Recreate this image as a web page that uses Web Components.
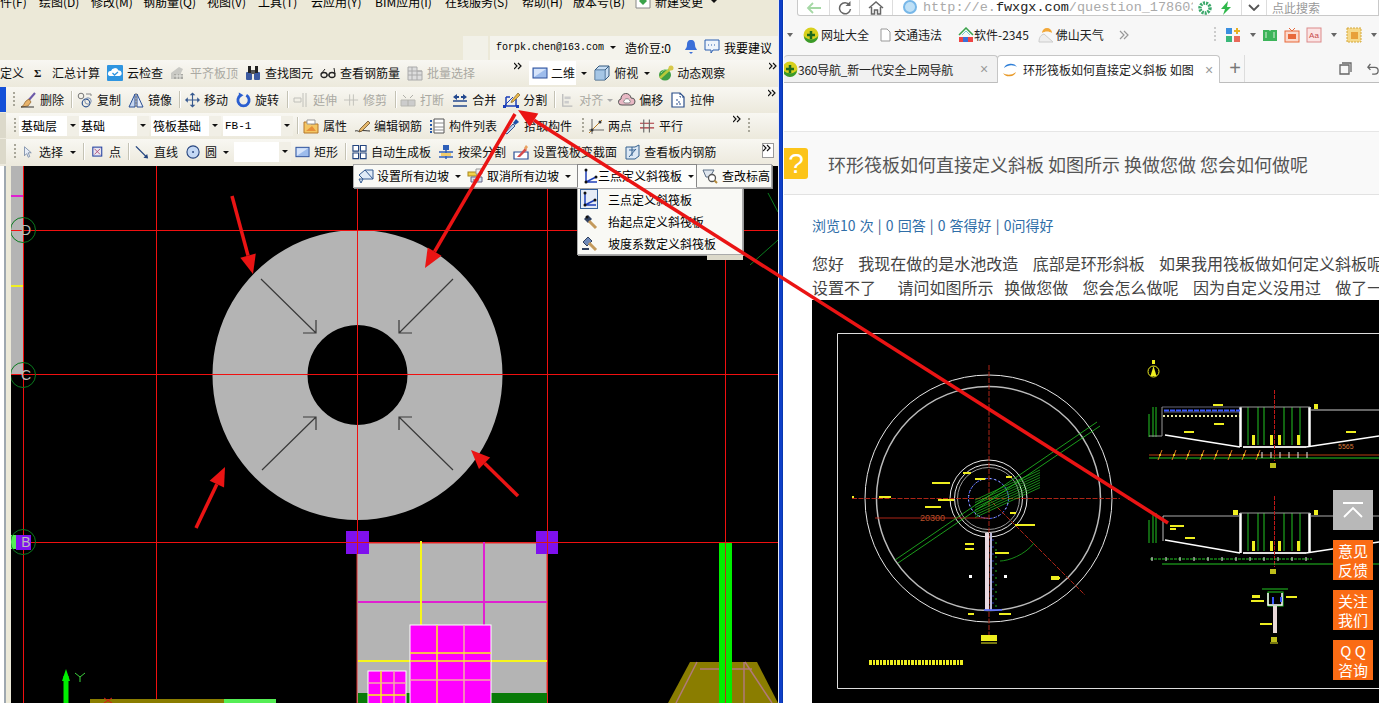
<!DOCTYPE html>
<html lang="zh">
<head>
<meta charset="utf-8">
<title>CAD</title>
<style>
  html, body { margin: 0; padding: 0; height: 703px; overflow: hidden; background: #fff; }
  body { font: 12px "Noto Sans CJK SC", "Liberation Sans", sans-serif; color: #000; }
</style>
</head>
<body>

<desk-top>
  <cad-app>
    <cad-menu></cad-menu>
    <user-bar></user-bar>

    <tool-row style="height:27px;padding-bottom:2px">
      <tool-item label="定义"></tool-item>
      <tool-item icon="sigma" iw="12" gap="6" label="汇总计算" style="margin-left:10px"></tool-item>
      <tool-item icon="cloud" label="云检查" style="margin-left:7px"></tool-item>
      <tool-item icon="level" label="平齐板顶" grey style="margin-left:7px"></tool-item>
      <tool-item icon="binoc" label="查找图元" style="margin-left:7px"></tool-item>
      <tool-item icon="glasses" label="查看钢筋量" style="margin-left:7px"></tool-item>
      <tool-item icon="batch" label="批量选择" grey style="margin-left:7px"></tool-item>
      <tool-more style="margin-left:39px"></tool-more>
      <tool-item icon="plane" gap="3" label="二维" boxed style="margin-left:7px"></tool-item>
      <tool-caret style="margin-left:5px"></tool-caret>
      <tool-item icon="cube" label="俯视" style="margin-left:7px"></tool-item>
      <tool-caret style="margin-left:6px"></tool-caret>
      <tool-item icon="orbit" gap="3" label="动态观察" style="margin-left:8px"></tool-item>
      <tool-more style="margin-left:44px"></tool-more>
    </tool-row>

    <tool-row>
      <tool-block color="#1450d8"></tool-block>
      <tool-grip style="margin-left:7px"></tool-grip>
      <tool-item icon="broom" label="删除" style="margin-left:5px"></tool-item>
      <tool-sep style="margin-left:7px"></tool-sep>
      <tool-item icon="copy" label="复制" style="margin-left:5px"></tool-item>
      <tool-item icon="mirror" label="镜像" style="margin-left:7px"></tool-item>
      <tool-sep style="margin-left:7px"></tool-sep>
      <tool-item icon="move" iw="15" label="移动" style="margin-left:5px"></tool-item>
      <tool-item icon="rotate" iw="15" label="旋转" style="margin-left:8px"></tool-item>
      <tool-sep style="margin-left:8px"></tool-sep>
      <tool-item icon="extend" label="延伸" grey style="margin-left:5px"></tool-item>
      <tool-item icon="trim" iw="15" label="修剪" grey style="margin-left:7px"></tool-item>
      <tool-sep style="margin-left:8px"></tool-sep>
      <tool-item icon="break" label="打断" grey style="margin-left:4px"></tool-item>
      <tool-item icon="merge" label="合并" style="margin-left:8px"></tool-item>
      <tool-item icon="split" label="分割" style="margin-left:7px"></tool-item>
      <tool-sep style="margin-left:7px"></tool-sep>
      <tool-item icon="align" iw="14" label="对齐" grey style="margin-left:6px"></tool-item>
      <tool-caret grey style="margin-left:4px"></tool-caret>
      <tool-item icon="offset" label="偏移" style="margin-left:6px"></tool-item>
      <tool-item icon="stretch" label="拉伸" style="margin-left:7px"></tool-item>
      <tool-more style="margin-left:54px"></tool-more>
    </tool-row>

    <tool-row>
      <tool-block color="#dcd9ca"></tool-block>
      <tool-grip style="margin-left:8px"></tool-grip>
      <tool-select label="基础层" w="60" style="margin-left:3px"></tool-select>
      <tool-select label="基础" w="70"></tool-select>
      <tool-select label="筏板基础" w="70" style="margin-left:2px"></tool-select>
      <tool-select label="FB-1" mono w="70" style="margin-left:2px"></tool-select>
      <tool-sep style="margin-left:4px"></tool-sep>
      <tool-item icon="folder" label="属性" style="margin-left:5px"></tool-item>
      <tool-item icon="pen" label="编辑钢筋" style="margin-left:7px"></tool-item>
      <tool-item icon="list" label="构件列表" style="margin-left:7px"></tool-item>
      <tool-item icon="dropper" label="拾取构件" style="margin-left:7px"></tool-item>
      <tool-grip style="margin-left:10px"></tool-grip>
      <tool-item icon="twopt" label="两点" style="margin-left:4px"></tool-item>
      <tool-item icon="hash" iw="15" label="平行" style="margin-left:8px"></tool-item>
      <tool-more style="margin-left:50px"></tool-more>
      <tool-grip style="margin-left:7px"></tool-grip>
    </tool-row>

    <tool-row style="height:27px;padding-bottom:2px">
      <tool-block color="#dcd9ca"></tool-block>
      <tool-grip style="margin-left:8px"></tool-grip>
      <tool-item icon="cursor" iw="12" label="选择" style="margin-left:7px"></tool-item>
      <tool-caret style="margin-left:7px"></tool-caret>
      <tool-sep style="margin-left:7px"></tool-sep>
      <tool-item icon="point" iw="13" label="点" style="margin-left:8px"></tool-item>
      <tool-sep style="margin-left:7px"></tool-sep>
      <tool-item icon="line" iw="15" label="直线" style="margin-left:6px"></tool-item>
      <tool-item icon="circle" iw="15" label="圆" style="margin-left:8px"></tool-item>
      <tool-caret style="margin-left:6px"></tool-caret>
      <tool-select label="" w="57" style="margin-left:5px"></tool-select>
      <tool-item icon="plane" iw="15" label="矩形" style="margin-left:4px"></tool-item>
      <tool-sep style="margin-left:7px"></tool-sep>
      <tool-item icon="auto" iw="15" label="自动生成板" style="margin-left:6px"></tool-item>
      <tool-item icon="beam" label="按梁分割" style="margin-left:7px"></tool-item>
      <tool-item icon="varsec" label="设置筏板变截面" style="margin-left:7px"></tool-item>
      <tool-item icon="rebar" label="查看板内钢筋" style="margin-left:7px"></tool-item>
      <tool-more boxed style="margin-left:47px"></tool-more>
    </tool-row>

    <cad-work></cad-work>
  </cad-app>

  <pane-divider></pane-divider>

  <browser-pane>
    <browser-nav></browser-nav>
    <browser-marks></browser-marks>
    <browser-tabs></browser-tabs>
    <qa-page></qa-page>
    <side-float></side-float>
  </browser-pane>

  <slope-popup></slope-popup>
  <red-arrows></red-arrows>
</desk-top>

<script>
const ICONS = {
  sigma: '<text x="0" y="13" font-family="Liberation Serif" font-weight="bold" font-size="15" fill="#111">Σ</text>',
  cloud: '<rect width="16" height="16" rx="1" fill="#2f95e0"/><path d="M3 11a2.5 2.5 0 0 1 1-5 4 4 0 0 1 7.500-.5 2.800 2.800 0 0 1 1 5.500z" fill="#fff"/><path d="M5.500 8l2 2 3.500-3" fill="none" stroke="#2f95e0" stroke-width="1.300"/>',
  level: '<path d="M1 8l8-6 4 2-2 4v6H1z" fill="#c9c9c4"/><path d="M4 9h9v5H4z" fill="#a9a9a4"/><path d="M4 11h9M7 9v5M10 9v5" stroke="#e8e8e2"/>',
  binoc: '<rect x="1" y="7" width="6" height="8" rx="1" fill="#3c5aa0"/><rect x="9" y="7" width="6" height="8" rx="1" fill="#3c5aa0"/><rect x="3" y="1" width="3" height="7" fill="#222"/><rect x="10" y="1" width="3" height="7" fill="#222"/><rect x="6" y="5" width="4" height="4" fill="#555"/>',
  glasses: '<ellipse cx="4" cy="10" rx="3" ry="2.500" fill="none" stroke="#222" stroke-width="1.300"/><ellipse cx="12" cy="10" rx="3" ry="2.500" fill="none" stroke="#222" stroke-width="1.300"/><path d="M7 10h2M1 9l4-5M15 9l-1-6" stroke="#222" fill="none"/>',
  batch: '<path d="M1 2h9v4h5v9H1z" fill="#ddd" stroke="#aaa"/><path d="M1 6h14M1 10h14M5 2v13M10 6v9" stroke="#aaa"/>',
  plane: '<rect x="1" y="3" width="14" height="10" fill="#9dbcec" stroke="#2b4f9a"/><path d="M2 4h12L2 12z" fill="#d6e4fa"/>',
  cube: '<path d="M1 5l4-4h10v10l-4 4H1z" fill="#c6dcf2" stroke="#33597f"/><path d="M1 5h10v10M11 5l4-4" fill="none" stroke="#33597f"/><rect x="1" y="5" width="10" height="10" fill="#8fb8dc" opacity=".6"/>',
  orbit: '<ellipse cx="7" cy="10" rx="6" ry="5.500" fill="#3f9f43"/><path d="M2 13L14 2" stroke="#b8c93a" stroke-width="2.500"/><circle cx="13" cy="3" r="2.500" fill="#d8c84a"/><path d="M3 8c2-3 5-4 7-3" stroke="#a6dd9a" fill="none"/>',
  broom: '<path d="M15 1L8 9" stroke="#6c5aa8" stroke-width="2"/><path d="M9 7l2 3-3 4-7 1c3-1 3-4 5-6z" fill="#e8b36a" stroke="#8a5b22" stroke-width=".7"/><path d="M1 15h13" stroke="#333"/>',
  copy: '<circle cx="4" cy="4" r="2.800" fill="none" stroke="#777"/><circle cx="9" cy="11" r="3.800" fill="none" stroke="#31558f" stroke-width="1.200"/><circle cx="11" cy="9" r="3.200" fill="none" stroke="#7a8fb0"/><path d="M9 2h5v2" stroke="#888" fill="none"/>',
  mirror: '<path d="M7 2v13H1z" fill="#c7d7f0" stroke="#2a4f95"/><path d="M9 2v13h6z" fill="#e8eef8" stroke="#2a4f95"/><path d="M8 1v14" stroke="#777" stroke-dasharray="2 1"/>',
  move: '<path d="M8 1v14M1 8h14" stroke="#36598f" stroke-width="1.200"/><path d="M8 0l3 3H5zM8 16l3-3H5zM0 8l3-3v6zM16 8l-3-3v6z" fill="#36598f"/>',
  rotate: '<path d="M5 3a6 6 0 1 0 6 0" fill="none" stroke="#2a5ed0" stroke-width="3"/><path d="M3 0l5 3-5 3z" fill="#2a5ed0"/>',
  extend: '<path d="M1 6h7M1 10h7M10 1v14M13 1v14" stroke="#c0c0ba" fill="none"/><path d="M1 6v4M8 6v4" stroke="#c0c0ba"/>',
  trim: '<path d="M0 8h15M6 2v12M10 2v12" stroke="#c0c0ba" fill="none"/>',
  break: '<path d="M1 8h14v6H1z" fill="#ccc" stroke="#b8b8b2"/><path d="M3 3l3 3M13 3l-3 3M8 8v6" stroke="#b0b0aa"/>',
  merge: '<path d="M1 9h14M1 14h14" stroke="#24498f" stroke-width="1.500"/><path d="M1 5l4-3v2h2v2H5v2zM15 5l-4-3v2H9v2h2v2z" fill="#24498f"/>',
  split: '<path d="M1 14h14M3 5v9M13 7v7M3 5h4" stroke="#1c3fb8" stroke-width="1.500" fill="none"/><path d="M1 14l9-9" stroke="#1c3fb8"/><path d="M9 8l6-7 2 2-7 7-2 .5z" fill="#e8b84a" stroke="#6a4d18" stroke-width=".6"/><rect x="0" y="13" width="3" height="3" fill="#1c3fb8"/><rect x="13" y="13" width="3" height="3" fill="#1c3fb8"/>',
  align: '<path d="M2 1v14h11" stroke="#bbb" fill="none" stroke-width="1.500"/><rect x="4" y="4" width="7" height="3" fill="#ccc"/><rect x="4" y="9" width="5" height="3" fill="#ccc"/>',
  offset: '<path d="M3 13a3 3 0 0 1-1-6 5 5 0 0 1 10-1 3.500 3.500 0 0 1 1 7z" fill="#e8b8c4" stroke="#555"/><path d="M5.500 11a2 2 0 0 1 0-3 3 3 0 0 1 5 0 2 2 0 0 1 0 3z" fill="#fff" stroke="#888"/>',
  stretch: '<path d="M2 1h8l4 4v10H2z" fill="#fff" stroke="#2b4f8a" stroke-width="1.200"/><path d="M10 1v4h4M6 8h3M8 10h3M6 12h5" stroke="#2b4f8a" fill="none" stroke-dasharray="2 1"/>',
  folder: '<path d="M1 4h6l1 2h7v9H1z" fill="#f4c663" stroke="#b5772a"/><path d="M4 2h8v4H4z" fill="#fff" stroke="#999"/><path d="M3 13l6-5 4 5z" fill="#e78f3a"/>',
  pen: '<path d="M1 13c3-1 3 1 5 0s8 0 10 0" stroke="#333" fill="none"/><path d="M6 11l8-8 2 2-8 8-3 1z" fill="#e4b76a" stroke="#5b3d18" stroke-width=".7"/>',
  list: '<path d="M5 1h10v14H5z" fill="#fff" stroke="#555"/><path d="M5 5h10M5 9h10M5 12h10" stroke="#888"/><path d="M1 3h2M1 7h2M1 11h2M1 14h2" stroke="#2456a8" stroke-width="2"/>',
  dropper: '<path d="M1 15l8-9 2 2-8 8z" fill="#bcd6f2" stroke="#36558f"/><path d="M9 5l3-4 3 3-4 3z" fill="#1c4fa8"/>',
  twopt: '<path d="M1 12h15M4 1v15" stroke="#666" fill="none"/><path d="M1 15L14 2" stroke="#b77a22"/><circle cx="4" cy="12" r="1.500" fill="#333"/><circle cx="12" cy="4" r="1.500" fill="#333"/>',
  hash: '<path d="M0 5h15M0 10h15" stroke="#a8333a" stroke-width="1.200"/><path d="M4 1v14M10 1v14" stroke="#666" stroke-width="1.200"/>',
  cursor: '<path d="M2 1v12l3-3 2 5 2-1-2-5h4z" fill="#e8eef8" stroke="#6b7f9e"/>',
  point: '<rect x="1" y="2" width="11" height="11" fill="#e8e6f0" stroke="#2340a0" stroke-width="1.300"/><path d="M3 4l7 7M10 4l-7 7" stroke="#a83a6a"/>',
  line: '<path d="M1 2l12 12" stroke="#24457f" stroke-width="1.500"/><path d="M14 15l-5-1 4-4z" fill="#24457f"/>',
  circle: '<circle cx="7.500" cy="8" r="6.500" fill="#c4d8f4" stroke="#27457f" stroke-width="1.200"/><circle cx="7.500" cy="8" r="1" fill="#27457f"/>',
  auto: '<path d="M1 1h6v6H1zM9 1h6v6H9zM1 9h6v6H1zM9 9h6v6H9z" fill="#fff" stroke="#24457f" stroke-width="1.200"/>',
  beam: '<rect x="5" y="1" width="6" height="5" fill="#2f5fb8"/><path d="M1 8h14M8 6v9M1 13h14" stroke="#2f5fb8" stroke-width="1.500"/><rect x="3" y="9" width="10" height="3" fill="#f1cc6a"/>',
  varsec: '<path d="M1 8h14v7H1z" fill="#fff" stroke="#2a4f95" stroke-width="1.200"/><path d="M4 13L12 4l2 2-7 7z" fill="#d64a4a"/><path d="M11 4l2-3 2 2-2 3z" fill="#e8a060"/>',
  rebar: '<path d="M2 3h9l4-2v11l-4 3H2z" fill="#dce8f4" stroke="#34608f"/><path d="M5 6h6M8 3v9M5 13l7-8" stroke="#34608f" fill="none"/>',
  slope: '<path d="M1 7l6-5h8v9H5l-2 4-2-4h4z" fill="#dfeaf6" stroke="#33598f"/><path d="M7 2l8 9" stroke="#33598f"/>',
  slopeoff: '<rect x="1" y="4" width="9" height="4" fill="#f1d24a" stroke="#a8871f"/><path d="M4 9h11v5H4z" fill="#cfe0ef" stroke="#668"/><path d="M9 1h6v5H9z" fill="#eee" stroke="#999"/><path d="M6 12h6" stroke="#c33"/>',
  three: '<path d="M4 1v13h11M4 14L14 9" stroke="#1f3fb8" stroke-width="1.500" fill="none"/><circle cx="4" cy="2" r="1.500" fill="#111"/><circle cx="4" cy="14" r="1.500" fill="#111"/><circle cx="14" cy="9" r="1.500" fill="#111"/>',
  magnify: '<path d="M1 2h11l-4 7H4z" fill="#dfe6ee" stroke="#5b6e85"/><circle cx="10" cy="10" r="3.500" fill="#fff" stroke="#555" stroke-width="1.300"/><path d="M12.500 12.500L15 15" stroke="#b58a3a" stroke-width="2"/>',
  hammer: '<path d="M3 6l4-4 4 4-4 4z" fill="#31415f"/><path d="M8 8l7 7" stroke="#c49a5c" stroke-width="3"/><circle cx="6" cy="4" r="1.500" fill="#111"/>',
  hammer2: '<path d="M2 7l5-5 4 4-5 5z" fill="#6f89b8" stroke="#31415f"/><path d="M8 8l7 7" stroke="#c49a5c" stroke-width="3"/><path d="M1 14h7" stroke="#31415f" stroke-width="2"/>',
  ring: '<circle cx="8" cy="8" r="7.500" fill="#d8d01c"/><path d="M1 9a7 7 0 0 0 14 0 9 9 0 0 1-14 0z" fill="#3a9a2a"/><path d="M8 4v8M4 8h8" stroke="#1c6a1c" stroke-width="2.500"/>'
};

function svgIcon(name, w) {
  return `<svg width="${w}" height="16" viewBox="0 0 16 16" style="display:block;overflow:visible">${ICONS[name] || ''}</svg>`;
}

class ToolRow extends HTMLElement {
  connectedCallback() {
    this.attachShadow({ mode: 'open' });
    this.shadowRoot.innerHTML = `
      <style>
        :host { display: flex; align-items: center; height: 26px; padding-bottom: 1px; box-sizing: border-box;
          background: linear-gradient(#f8f7f2, #ece9dc); white-space: nowrap; flex: none; }
      </style><slot></slot>`;
  }
}
class ToolItem extends HTMLElement {
  connectedCallback() {
    const root = this.attachShadow({ mode: 'open' });
    const icon = this.getAttribute('icon');
    const iw = +(this.getAttribute('iw') || 16);
    const gap = this.getAttribute('gap') || 4;
    root.innerHTML = `
      <style>
        :host { display: flex; align-items: center; gap: ${gap}px; flex: none; font-size: 12px; line-height: 16px; color: #111; }
        :host([grey]) { color: #aaa9a2; }
        :host([boxed]) { background: #fff; height: 24px; padding: 0 1px 0 3px; }
      </style>
      ${icon ? svgIcon(icon, iw) : ''}<span>${this.getAttribute('label')}</span>`;
  }
}
class ToolSep extends HTMLElement {
  connectedCallback() {
    this.attachShadow({ mode: 'open' }).innerHTML = `<style>:host { display:block; width:1px; height:17px; background:#c4c2b4; box-shadow:1px 0 #fff; flex:none; }</style>`;
  }
}
class ToolGrip extends HTMLElement {
  connectedCallback() {
    this.attachShadow({ mode: 'open' }).innerHTML = `<style>:host { display:block; width:2px; height:16px; flex:none;
      background: repeating-linear-gradient(#a9a79a 0 2px, transparent 2px 4px); }</style>`;
  }
}
class ToolCaret extends HTMLElement {
  connectedCallback() {
    this.attachShadow({ mode: 'open' }).innerHTML = `<style>:host { display:block; width:0; height:0; flex:none; margin-top:1px;
      border:3px solid transparent; border-top:3px solid #111; border-bottom:0; }
      :host([grey]) { border-top-color:#aaa; }</style>`;
  }
}
class ToolMore extends HTMLElement {
  connectedCallback() {
    this.attachShadow({ mode: 'open' }).innerHTML = `<style>:host { display:block; width:8px; height:14px; flex:none; margin-top:-8px; }
      :host([boxed]) { width:10px; height:13px; margin-top:-2px; background:#fff; outline:1px solid #999; }
      svg { display:block; }</style>
      <svg width="8" height="8" viewBox="0 0 8 8"><path d="M0 1l3 3-3 3M4 1l3 3-3 3" fill="none" stroke="#111" stroke-width="1.200"/></svg>`;
  }
}
class ToolSelect extends HTMLElement {
  connectedCallback() {
    const mono = this.hasAttribute('mono');
    this.attachShadow({ mode: 'open' }).innerHTML = `
      <style>
        :host { display:flex; align-items:center; width:${this.getAttribute('w')}px; height:20px; background:#fff; flex:none; box-sizing:border-box; padding-left:2px; }
        span { flex:1; ${mono ? 'font:11px "Liberation Mono", monospace;' : ''} }
        i { display:flex; align-items:center; justify-content:center; width:12px; height:20px; background:#f1efe6; }
        b { border:3px solid transparent; border-top:3px solid #111; border-bottom:0; }
      </style><span>${this.getAttribute('label')}</span><i><b></b></i>`;
  }
}
class ToolBlock extends HTMLElement {
  connectedCallback() {
    this.attachShadow({ mode: 'open' }).innerHTML = `<style>:host { display:block; width:6px; height:100%; flex:none; background:${this.getAttribute('color')}; }</style>`;
  }
}

class CadMenu extends HTMLElement {
  connectedCallback() {
    const items = ['件(F)','绘图(D)','修改(M)','钢筋量(Q)','视图(V)','工具(T)','云应用(Y)','BIM应用(I)','在线服务(S)','帮助(H)','版本号(B)'];
    const widths = [39, 52, 52, 64, 51, 53, 64, 70, 77, 51, 62];
    this.attachShadow({ mode: 'open' }).innerHTML = `
      <style>
        :host { display:block; height:10px; overflow:hidden; background:#ece9d8; flex:none; }
        div { display:flex; align-items:center; height:16px; margin-top:-7px; white-space:nowrap; }
        span { flex:none; }
        svg { margin-right:4px; }
        b { margin-left:8px; border:3px solid transparent; border-top:3px solid #111; border-bottom:0; }
      </style>
      <div>${items.map((t, i) => `<span style="width:${widths[i]}px">${t}</span>`).join('')}
        <svg width="16" height="16" viewBox="0 0 16 16"><path d="M1 1h14v14H1z" fill="#fff" stroke="#888"/><path d="M8 4l4 4-4 4-4-4z" fill="#3aa24a"/></svg>
        <span>新建变更</span><b></b></div>`;
  }
}

class UserBar extends HTMLElement {
  connectedCallback() {
    this.attachShadow({ mode: 'open' }).innerHTML = `
      <style>
        :host { display:flex; height:24px; margin-top:26px; background:#ece9d8; flex:none; padding-left:463px; gap:2px; box-sizing:border-box; }
        .tab { width:25px; background:#f2f1e8; }
        .main { flex:1; background:#f4f3ec; display:flex; align-items:center; padding:0 0 2px 6px; }
        .mail { font:10px "Liberation Mono", monospace; width:108px; }
        b { border:3px solid transparent; border-top:3px solid #111; border-bottom:0; margin:1px 9px 0 6px; }
        .bean { margin-right:11px; width:48px; }
        svg { display:block; flex:none; }
      </style>
      <div class="tab"></div>
      <div class="main">
        <span class="mail">forpk.chen@163.com</span><b></b>
        <span class="bean">造价豆:0</span>
        <svg width="14" height="16" viewBox="0 0 14 16"><path d="M7 1c3 0 4 2 4 5s2 4 2 5H1c0-1 2-2 2-5s1-5 4-5z" fill="#3b6fd8"/><path d="M5 13h4l-2 2z" fill="#3b6fd8"/></svg>
        <svg width="16" height="16" viewBox="0 0 16 16" style="margin:0 4px 0 6px"><path d="M1 1h14v10H9l-2 3v-3H1z" fill="#eef4fb" stroke="#2a5fb0"/><path d="M4 6h1M7 6h1M10 6h1" stroke="#2a5fb0"/></svg>
        <span>我要建议</span>
      </div>`;
  }
}

class CadWork extends HTMLElement {
  connectedCallback() {
    const grid = (x0, y0, x1, y1, xs, ys) => {
      let s = `<rect x="${x0}" y="${y0}" width="${x1 - x0}" height="${y1 - y0 + 20}" fill="#ff00ff" stroke="#fff"/>`;
      xs.forEach(([x, c]) => s += `<path d="M${x} ${y0}V${y1 + 20}" stroke="${c}" stroke-width="1.500"/>`);
      ys.forEach(([y, c]) => s += `<path d="M${x0} ${y}H${x1}" stroke="${c}" stroke-width="1.500"/>`);
      return s;
    };
    const cross = (x, y, l) => `<circle cx="${x}" cy="${y}" r="12.500" fill="none" stroke="#0a7a1e"/><text x="${x + 3}" y="${y + 5}" font-family="Liberation Sans" font-size="14" text-anchor="middle" fill="#b9bdb9">${l}</text>`;
    this.attachShadow({ mode: 'open' }).innerHTML = `
      <style>
        :host { display:flex; flex:1; min-height:0; background:#ece9d8; }
        .side { width:11px; flex:none; background:linear-gradient(90deg,#fff 0 4px,#9fa8b0 4px 6px,#ece9d8 6px); }
        svg { display:block; flex:1; height:100%; background:#000; }
      </style>
      <div class="side"></div>
      <svg viewBox="11 166 767 537" preserveAspectRatio="xMinYMin slice">
        <rect x="11" y="166" width="12" height="209" fill="#b4b4b4"/>
        <rect x="11" y="195" width="12" height="2" fill="#e020d0"/>
        <rect x="11" y="285" width="12" height="2" fill="#f0f020"/>
        <path d="M357.500 230a145 145 0 1 1-.01 0zM357.500 325a50 50 0 1 0 .01 0z" fill="#b4b4b4" fill-rule="evenodd"/>
        <g stroke="#f01010" stroke-width="1" fill="none">
          <path d="M23.500 166V703M156.500 166V703M357.500 166V703M547.500 166V703M725.500 166V703"/>
          <path d="M11 230.500H778M11 374.500H778M11 542.500H778"/>
        </g>
        <g stroke="#3a3a3a" stroke-width="1.200" fill="none">
          <path d="M261 279L316 333M316 320V333H303M453 279L399 333M399 320V333H412M262 470L316 417M303 417H316V430M453 470L399 417M412 417H399V430"/>
        </g>
        <path d="M750 265L778 240M768 193L778 212" stroke="#0a7a1e" fill="none"/>
        ${cross(23, 230, 'D')}${cross(23, 375, 'C')}
        <rect x="11" y="535" width="5" height="14" fill="#55ee55"/>
        <rect x="16" y="535" width="15" height="15" fill="#7f10ee"/>
        ${cross(23, 542, 'B')}
        <rect x="357" y="543" width="190" height="160" fill="#b4b4b4" stroke="#e03030"/>
        <rect x="358" y="693" width="189" height="10" fill="#087a08"/>
        <path d="M358 602H547" stroke="#e020d0" stroke-width="2"/>
        <path d="M484 542V625" stroke="#e020d0" stroke-width="2"/>
        <path d="M421 541V625" stroke="#f6f61c" stroke-width="2"/>
        <path d="M358 661H547" stroke="#f6f61c" stroke-width="2"/>
        ${grid(410, 625, 491, 703, [[437, '#f6f61c'], [464, '#f4a8a8']], [[653, '#f6f61c'], [661, '#f6f61c'], [680, '#f4a8a8']])}
        ${grid(368, 671, 406, 703, [[381, '#f6f61c'], [394, '#f4a8a8']], [[683, '#f4a8a8'], [695, '#f6f61c']])}
        <rect x="346" y="531" width="23" height="23" fill="#7f10ee"/>
        <rect x="536" y="531" width="22" height="23" fill="#7f10ee"/>
        <path d="M357.500 531V554M346 542.500H369M547.500 531V554M536 542.500H558" stroke="#d81818"/>
        <path d="M690 662H757L778 703H668z" fill="#8a7d00"/>
        <path d="M697 662L676 703M700 669H752M745 662L772 703M744 662V703" stroke="#b07a7a" stroke-width="1.500" fill="none"/>
        <rect x="719" y="543" width="13" height="160" fill="#00ee00"/>
        <path d="M725.500 543V703" stroke="#c03018"/>
        <rect x="90" y="699" width="134" height="4" fill="#8a7d00"/>
        <rect x="224" y="699" width="52" height="4" fill="#55ee55"/>
        <path d="M66 703V676" stroke="#00ee00" stroke-width="5"/><path d="M66 669l4 12h-8z" fill="#00ee00"/>
        <path d="M75 673l5 4 5-4M80 677v5" stroke="#3cd23c" fill="none"/>
        <path d="M104 698l8 5M112 698l-8 5" stroke="#d81818" fill="none"/>
      </svg>`;
  }
}

class PaneDivider extends HTMLElement {
  connectedCallback() {
    this.attachShadow({ mode: 'open' }).innerHTML = `<style>:host { display:block; width:6px; flex:none; background:linear-gradient(90deg,#e6e8f4 0 1px,#0f3fc8 1px 4px,#0838b0 4px 5px,#fff 5px); }</style>`;
  }
}

class BrowserNav extends HTMLElement {
  connectedCallback() {
    this.attachShadow({ mode: 'open' }).innerHTML = `
      <style>
        :host { display:block; height:18px; background:#f7f7f7; padding:0 0 0 13px; flex:none; overflow:hidden; }
        .box { display:flex; align-items:center; height:16px; background:#fff; border:1px solid #c9c9c9; border-top:0; border-radius:0 0 0 3px; box-sizing:border-box; }
        .b { display:flex; align-items:center; justify-content:center; height:100%; border-right:1px solid #ddd; flex:none; }
        svg { display:block; flex:none; }
        .url { flex:none; width:270px; overflow:hidden; white-space:nowrap; font:13.500px "Liberation Mono", monospace; color:#aaa; margin:0 5px 0 5px; line-height:16px; }
        .url b { color:#222; font-weight:normal; }
        .s { margin-left:5px; color:#999; font-size:12px; white-space:nowrap; }
      </style>
      <div class="box">
        <div class="b" style="width:31px"><svg width="16" height="12" viewBox="0 0 16 12"><path d="M7 1L2 6l5 5M2 6h13" stroke="#a5d8a5" stroke-width="1.800" fill="none"/></svg></div>
        <div class="b" style="width:29px"><svg width="14" height="14" viewBox="0 0 14 14"><path d="M11.500 4a5.500 5.500 0 1 0 1 4" stroke="#666" stroke-width="1.500" fill="none"/><path d="M12.500 0v5h-5z" fill="#666"/></svg></div>
        <div class="b" style="width:32px"><svg width="16" height="14" viewBox="0 0 16 14"><path d="M1 7l7-6 7 6M3.500 6v7h3V9h3v4h3V6" stroke="#666" stroke-width="1.500" fill="none"/></svg></div>
        <svg width="16" height="16" viewBox="0 0 16 16" style="margin-left:9px"><circle cx="8" cy="7" r="6" fill="#bfe0f6" stroke="#77b7e8" stroke-width="2"/></svg>
        <div class="url">http://e.<b>fwxgx.com</b>/question_178603</div>
        <svg width="14" height="14" viewBox="0 0 14 14"><circle cx="7" cy="7" r="5" fill="none" stroke="#3aa86a" stroke-width="3.500" stroke-dasharray="2 1"/></svg>
        <svg width="12" height="14" viewBox="0 0 12 14" style="margin-left:8px"><path d="M8 0L1 8h4l-2 6 8-8H7z" fill="#2fb84a"/></svg>
        <div class="b" style="width:9px;height:100%"></div>
        <div class="b" style="width:24px"><svg width="12" height="7" viewBox="0 0 12 7"><path d="M1 1l5 5 5-5" stroke="#555" stroke-width="1.800" fill="none"/></svg></div>
        <span class="s">点此搜索</span>
      </div>`;
  }
}

class BrowserMarks extends HTMLElement {
  connectedCallback() {
    const caret = m => `<b style="margin-left:${m}px"></b>`;
    this.attachShadow({ mode: 'open' }).innerHTML = `
      <style>
        :host { display:flex; align-items:center; height:37px; padding:0 0 4px 3px; background:#f7f7f7; flex:none; white-space:nowrap; box-sizing:border-box; color:#222; }
        svg { display:block; flex:none; }
        b { flex:none; border:3px solid transparent; border-top:4px solid #666; border-bottom:0; }
        span { flex:none; }
        i { flex:none; width:2px; height:16px; background:repeating-linear-gradient(#ccc 0 2px,transparent 2px 4px); }
      </style>
      <b></b>
      <svg width="16" height="16" viewBox="0 0 16 16" style="margin-left:10px">${ICONS.ring}</svg>
      <span style="margin-left:2px">网址大全</span>
      <svg width="11" height="14" viewBox="0 0 11 14" style="margin-left:11px"><path d="M1 1h6l3 3v9H1z" fill="#fff" stroke="#999"/></svg>
      <span style="margin-left:3px">交通违法</span>
      <svg width="16" height="16" viewBox="0 0 16 16" style="margin-left:16px"><path d="M1 8l7-7 7 7" fill="none" stroke="#3aa24a" stroke-width="1.500"/><path d="M4 8l4-4 4 4" fill="none" stroke="#7cc"/><rect x="1" y="10" width="14" height="5" fill="#e44"/><rect x="5" y="10" width="5" height="5" fill="#3a6fd8"/></svg>
      <span style="margin-left:0">软件-2345</span>
      <svg width="16" height="16" viewBox="0 0 16 16" style="margin-left:9px"><path d="M1 15c0-5 2-7 5-8l9 8z" fill="#eee" stroke="#ccc"/><path d="M4 6a5 5 0 0 1 10 0c-3-2-7-2-10 0z" fill="#f2a83a"/></svg>
      <span style="margin-left:2px">佛山天气</span>
      <svg width="10" height="10" viewBox="0 0 10 10" style="margin-left:15px"><path d="M1 1l4 4-4 4M5 1l4 4-4 4" stroke="#999" fill="none" stroke-width="1.200"/></svg>
      <i style="margin-left:85px"></i>
      <svg width="16" height="16" viewBox="0 0 16 16" style="margin-left:9px"><rect x="1" y="1" width="6" height="6" fill="#3a8fe0"/><path d="M12 1v6M9 4h6" stroke="#e8b020" stroke-width="2"/><rect x="1" y="9" width="6" height="6" fill="#3ab87a"/><rect x="9" y="9" width="6" height="6" fill="#e86a5a"/></svg>
      ${caret(9)}
      <svg width="16" height="16" viewBox="0 0 16 16" style="margin-left:6px"><path d="M1 3h6l1 1 1-1h6v11H1z" fill="#3cb45a"/><path d="M4 5v6M12 5v6" stroke="#d8f0d8"/></svg>
      <svg width="16" height="16" viewBox="0 0 16 16" style="margin-left:6px"><rect x="1" y="4" width="14" height="11" fill="#fbd9cc" stroke="#e8683a"/><rect x="4" y="7" width="8" height="5" fill="#e8683a"/><path d="M5 1l3 3 3-3" stroke="#e8683a" fill="none"/></svg>
      <svg width="16" height="16" viewBox="0 0 16 16" style="margin-left:6px"><rect x="1" y="1" width="14" height="14" fill="#fbe4e4" stroke="#dc8a8a"/><text x="8" y="11" text-anchor="middle" font-size="8" fill="#c84a4a" font-family="Liberation Sans">Aa</text></svg>
      ${caret(9)}
      <svg width="16" height="16" viewBox="0 0 16 16" style="margin-left:9px"><rect x="1" y="1" width="14" height="14" fill="#f6d98a" stroke="#d4a83a" stroke-dasharray="2 1"/><rect x="5" y="5" width="7" height="7" fill="#e8a03a"/></svg>
      ${caret(9)}`;
  }
}

class BrowserTabs extends HTMLElement {
  connectedCallback() {
    this.attachShadow({ mode: 'open' }).innerHTML = `
      <style>
        :host { display:flex; height:28px; background:#f7f7f7; flex:none; border-bottom:1px solid #bdbdbd; box-sizing:border-box; white-space:nowrap; color:#222; position:relative; }
        .tab { display:flex; align-items:center; height:28px; box-sizing:border-box; flex:none; border:1px solid #c6c6c6; border-radius:4px 4px 0 0; }
        .one { width:214px; background:#f1f1f1; padding-left:0; border-left:0; border-bottom:1px solid #bdbdbd; }
        .two { width:223px; background:#fff; border-bottom:0; padding-left:4px; margin-left:-1px; position:relative; }
        .lbl { overflow:hidden; flex:none; }
        .x { color:#999; font:14px "Liberation Sans", sans-serif; flex:none; }
        svg { display:block; flex:none; }
        .plus { font:20px/26px "Liberation Sans", sans-serif; color:#777; margin-left:6px; width:18px; text-align:center; }
        .sp { flex:1; display:flex; align-items:center; justify-content:flex-end; gap:15px; border-left:1px solid #ddd; }
      </style>
      <div class="tab one">
        <svg width="14" height="16" viewBox="2 0 14 16">${ICONS.ring}</svg>
        <span class="lbl" style="width:162px;letter-spacing:-.25px">360导航_新一代安全上网导航</span>
        <span class="x" style="margin-left:20px">×</span>
      </div>
      <div class="tab two">
        <svg width="16" height="16" viewBox="0 0 16 16"><path d="M2 6a7 6 0 0 1 13-1c-3-2-8-3-13 1z" fill="#2f7fd8"/><path d="M14 10a7 6 0 0 1-13 1c3 2 8 3 13-1z" fill="#e89a2a"/></svg>
        <span class="lbl" style="margin-left:5px;width:174px">环形筏板如何直接定义斜板 如图</span>
        <span class="x" style="margin-left:8px">×</span>
      </div>
      <span class="plus">+</span>
      <div class="sp">
        <svg width="13" height="14" viewBox="0 0 13 14"><path d="M3 1h9v9M1 3h9v9H1z" fill="none" stroke="#666" stroke-width="1.300"/></svg>
        <svg width="12" height="14" viewBox="0 0 14 14"><path d="M1 5h8a4 4 0 0 1 0 8H6M4 1L1 5l3 3" fill="none" stroke="#666" stroke-width="1.500"/></svg>
      </div>`;
  }
}

class QaPage extends HTMLElement {
  connectedCallback() {
    this.attachShadow({ mode: 'open' }).innerHTML = `
      <style>
        :host { display:flex; flex-direction:column; flex:1; min-height:0; background:#fff; overflow:hidden; }
        .head { display:flex; align-items:center; height:64px; margin-top:48px; flex:none; background:#f9f9f9; border-top:1px solid #e6e6e6; border-bottom:1px solid #e2e2e2; box-sizing:border-box; }
        .mark { width:24px; height:31px; background:#fcc419; border-radius:0 3px 3px 0; color:#fff; font:28px/31px "Liberation Sans", sans-serif; text-align:center; flex:none; }
        h1 { margin:2px 0 0 20px; font-size:18px; font-weight:normal; color:#555; line-height:24px; white-space:pre; }
        .stat { margin:20px 0 0 28px; font-size:14px; line-height:20px; color:#2f6ea8; flex:none; word-spacing:1px; white-space:pre; }
        .stat em { font-style:normal; color:#24568a; }
        p { margin:16px 0 1px 28px; font-size:16px; line-height:24px; color:#444; flex:none; white-space:pre; }
      </style>
      <div class="head"><div class="mark">?</div><h1>环形筏板如何直接定义斜板 如图所示 换做您做 您会如何做呢</h1></div>
      <div class="stat">浏览10 次 <em>|</em> 0 回答 <em>|</em> 0 答得好 <em>|</em> 0问得好</div>
      <p>您好    我现在做的是水池改造    底部是环形斜板    如果我用筏板做如何定义斜板呢
设置不了      请问如图所示   换做您做    您会怎么做呢    因为自定义没用过    做了一个</p>
      <cad-image></cad-image>`;
  }
}

class CadImage extends HTMLElement {
  connectedCallback() {
    const W = '#e8e8e8', G = '#22c522', Y = '#eeee20', R = '#c02818';
    const labels = [[932,482,18],[925,506,16],[938,499,16],[963,472,8],[975,478,10],[1006,476,6],[1015,524,20],[965,543,9],[965,548,9],[995,552,14],[1054,577,6],[968,613,6],[999,613,12],[852,496,2],[879,496,12],[1128,498,4],[1010,512,6]];
    const section = (top, slope) => {
      let s = '';
      [1248,1258,1264,1284,1292,1300].forEach(x => s += `<path d="M${x} ${top}V${top + 38}" stroke="${G}"/>`);
      [1252,1270,1278,1297].forEach(x => s += `<rect x="${x}" y="${top + 28}" width="3" height="10" fill="${Y}"/>`);
      s += `<path d="M1240.500 ${top}V${top + 40}M1309.500 ${top}V${top + 40}" stroke="#fff" stroke-width="2.500"/>`;
      s += `<path d="M1243 ${top + 40}H1306" stroke="#ddd" stroke-width="2"/><path d="M1240 ${top}H1310" stroke="#999"/>`;
      s += `<path d="M1165 ${top + slope}L1240 ${top + 40}M1306 ${top + 40}L1379 ${top + 29}" stroke="#fff" stroke-width="1.500"/>`;
      s += `<path d="M1274.500 ${top - 17}V${top + 54}" stroke="#c01818" stroke-dasharray="4 1"/>`;
      s += `<path d="M1149 ${top + 7}V${top + 30}M1153 ${top}V${top + 30}M1156 ${top}V${top + 30}" stroke="${G}"/>`;
      return s;
    };
    let ticks = '', dots = '';
    for (let x = 1160; x < 1260; x += 14) ticks += `<path d="M${x - 2} 460L${x + 2} 450" stroke="#e07a1a"/><circle cx="${x}" cy="455" r="1" fill="${Y}"/>`;
    for (let x = 1262; x < 1312; x += 9) ticks += `<path d="M${x} 452v6" stroke="#eee"/>`;
    for (let x = 1152; x < 1312; x += 14) dots += `<path d="M${x} 557v4" stroke="#eee"/>`;
    let rail = '';
    for (let y = 540; y < 610; y += 7) rail += `<circle cx="993" cy="${y}" r=".7" fill="#3c50ff"/><circle cx="996" cy="${y + 3}" r=".8" fill="${G}"/>`;
    let wires = '';
    for (let y = 470; y < 490; y += 2.5) wires += `<path d="M1040 ${y}L975 ${y + 30}" stroke="${G}" stroke-width=".7"/>`;
    this.attachShadow({ mode: 'open' }).innerHTML = `
      <style>
        :host { display:block; margin:0 0 0 28px; height:403px; background:#000; flex:none; }
        svg { display:block; }
      </style>
      <svg width="567" height="403" viewBox="812 300 567 403" font-family="Liberation Sans">
        <path d="M837.500 333.500H1379M837.500 333.500V688.500H1379" stroke="#ddd" fill="none"/>
        <g fill="none" stroke="${W}">
          <circle cx="988.500" cy="498.500" r="123.500"/>
          <circle cx="988.500" cy="498.500" r="112" stroke-width="1.500" stroke="#bbb"/>
          <circle cx="988.500" cy="498.500" r="38.500"/>
          <circle cx="988.500" cy="498.500" r="34"/>
          <circle cx="988.500" cy="498.500" r="31" stroke="#999"/>
        </g>
        <circle cx="988.500" cy="498.500" r="20" fill="none" stroke="#4a60ff" stroke-dasharray="3 1.500"/>
        <circle cx="988.500" cy="498.500" r="20" fill="none" stroke="#eee" stroke-dasharray="1 4"/>
        <g stroke="${R}" stroke-dasharray="5 1.500" stroke-width=".9" fill="none">
          <path d="M852 498.500H1120M989 365V636M988 498L1085 595"/>
          <path d="M875 518H988" stroke-dasharray="none"/>
        </g>
        <text x="920" y="521" font-size="9" fill="#b8502a">20300</text>
        <path d="M895 560L1097 422M898 563L1100 426" stroke="${G}" stroke-width=".8"/>
        ${wires}
        <path d="M1000 561c8 0 25-6 34-18" stroke="${G}" fill="none" stroke-width=".7"/>
        <rect x="985" y="533" width="4" height="77" fill="#e8d8e0"/>
        <rect x="990" y="533" width="2" height="77" fill="#b8b8d8"/>
        ${rail}
        <path d="M984 610H1002" stroke="#4a60ff" stroke-width="1.500"/>
        ${labels.map(([x, y, w]) => `<rect x="${x}" y="${y}" width="${w}" height="2" fill="${Y}"/>`).join('')}
        <rect x="969" y="575" width="3" height="3" fill="#fff"/><rect x="1004" y="575" width="3" height="3" fill="#fff"/>
        <rect x="1051" y="576" width="8" height="4" fill="${Y}"/>
        <rect x="981" y="635" width="16" height="6" fill="${Y}"/><path d="M981 643H997" stroke="${Y}"/>
        <path d="M869 662.500H963" stroke="${Y}" stroke-width="5" stroke-dasharray="3 1 2 1"/>
        <circle cx="1153.500" cy="371.500" r="5.500" fill="none" stroke="${Y}"/><path d="M1153.500 366l3 10h-6z" fill="${Y}"/>
        <rect x="1152" y="360" width="3" height="4" fill="${Y}"/>

        ${section(407, 28)}
        <path d="M1162 407H1240M1164 412H1239" stroke="#667" /><path d="M1164 410.500H1240" stroke="#3858ff" stroke-width="2" stroke-dasharray="5 1"/>
        <path d="M1163 416H1240" stroke="#e8e8a8" stroke-dasharray="2 2" stroke-width="2"/>
        <path d="M1162 407V436H1149" stroke="#999" fill="none"/>
        <path d="M1311 410H1379" stroke="#888" stroke-width="1.500"/>
        <path d="M1149 455H1379" stroke="#b83c10"/><path d="M1149 458H1379" stroke="${G}"/>
        ${ticks}
        <rect x="1270" y="463" width="6" height="5" fill="${Y}" opacity=".8"/>
        <rect x="1184" y="431" width="10" height="2" fill="${Y}"/><rect x="1214" y="423" width="10" height="2" fill="${Y}"/><rect x="1346" y="431" width="10" height="2" fill="${Y}"/>
        <rect x="1213" y="404" width="10" height="2" fill="${Y}"/><rect x="1314" y="404" width="4" height="5" fill="${Y}"/>
        <text x="1338" y="449" font-size="7" fill="#d8783a">5565</text>

        ${section(513, 27)}
        <path d="M1163 516H1240M1310 516H1379" stroke="#aaa"/>
        <path d="M1163 516V541" stroke="#bbb"/>
        <path d="M1150 559H1312" stroke="${G}" stroke-dasharray="3 1"/><path d="M1162 564H1379" stroke="${G}"/>
        ${dots}
        <rect x="1233" y="510" width="5" height="5" fill="${Y}"/><rect x="1314" y="510" width="4" height="5" fill="${Y}"/>
        <rect x="1170" y="525" width="14" height="2" fill="${Y}"/><rect x="1170" y="528" width="6" height="2" fill="${Y}"/>
        <rect x="1185" y="537" width="10" height="2" fill="${Y}"/><rect x="1270" y="569" width="6" height="5" fill="${Y}" opacity=".8"/>

        <rect x="1268" y="592" width="15" height="14" fill="none" stroke="${G}"/>
        <path d="M1268 593V605H1282V593" stroke="#fff" fill="none" stroke-width="1.500"/>
        <rect x="1272" y="597" width="2" height="7" fill="#3858ff"/><rect x="1280" y="597" width="2" height="5" fill="#3858ff"/>
        <rect x="1273" y="606" width="4" height="27" fill="#e8d8d8"/>
        <path d="M1262 589H1288" stroke="${G}"/>
        <rect x="1252" y="595" width="8" height="3" fill="${Y}"/><rect x="1251" y="600" width="13" height="2" fill="${Y}"/><rect x="1286" y="596" width="11" height="2" fill="${Y}"/><rect x="1260" y="623" width="12" height="2" fill="${Y}"/><rect x="1271" y="637" width="6" height="5" fill="${Y}" opacity=".8"/><path d="M1270 643H1278" stroke="${Y}"/>
      </svg>`;
  }
}

class SideFloat extends HTMLElement {
  connectedCallback() {
    this.attachShadow({ mode: 'open' }).innerHTML = `
      <style>
        :host { position:absolute; right:6px; top:490px; display:flex; flex-direction:column; gap:10px; width:40px; }
        div { width:40px; height:40px; background:#fa6b14; color:#fff; font-size:15px; line-height:19px; text-align:center; display:flex; align-items:center; justify-content:center; white-space:pre; }
        .top { background:#b8b8b8; }
      </style>
      <div class="top"><svg width="24" height="16" viewBox="0 0 24 16"><path d="M2 1H22M3 15L12 6L21 15" fill="none" stroke="#fff" stroke-width="1.800"/></svg></div>
      <div>意见
反馈</div>
      <div>关注
我们</div>
      <div>Q Q
咨询</div>`;
  }
}

class BrowserPane extends HTMLElement {
  connectedCallback() {
    this.attachShadow({ mode: 'open' }).innerHTML = `
      <style>:host { display:flex; flex-direction:column; flex:1; min-width:0; position:relative; overflow:hidden; height:703px; background:#fff; }</style><slot></slot>`;
  }
}

class CadApp extends HTMLElement {
  connectedCallback() {
    this.attachShadow({ mode: 'open' }).innerHTML = `
      <style>:host { display:flex; flex-direction:column; width:778px; height:703px; flex:none; overflow:hidden; background:#ece9d8; }</style><slot></slot>`;
  }
}

class SlopePopup extends HTMLElement {
  connectedCallback() {
    const row = (ic, t, on) => `<div class="row"><span class="ib ${on ? 'on' : ''}">${svgIcon(ic, 16)}</span><span>${t}</span></div>`;
    const c = '<b></b>';
    this.attachShadow({ mode: 'open' }).innerHTML = `
      <style>
        :host { position:absolute; left:353px; top:164px; width:419px; }
        .bar { display:flex; align-items:center; height:24px; background:#f9f9f5; border:1px solid #aaa; box-sizing:border-box; box-shadow:1px 1px 0 #888; padding:0 0 1px 4px; white-space:nowrap; }
        .it { display:flex; align-items:center; gap:3px; flex:none; }
        b { display:block; flex:none; border:3px solid transparent; border-top:3px solid #111; border-bottom:0; margin-top:1px; }
        svg { display:block; flex:none; }
        .sel { height:24px; margin-top:0; width:120px; box-sizing:border-box; background:#fdfdfb; border:1px solid #888; border-bottom-color:transparent; padding-left:4px; margin-left:6px; gap:0; }
        .menu { position:absolute; left:224px; top:24px; width:166px; height:67px; background:#f9f9f5; border:1px solid #aaa; box-sizing:border-box; box-shadow:1px 1px 0 #999; padding:0 0 0 2px; }
        .row { display:flex; align-items:center; height:22px; gap:10px; }
        .row:first-child { margin-top:-1px; }
        .ib { display:flex; align-items:center; justify-content:center; width:18px; height:20px; box-sizing:border-box; }
        .on { background:#e6ecf6; border:1px solid #34609c; }
        .tail { position:absolute; left:354px; top:91px; width:36px; height:5px; background:#dcd9ca; }
      </style>
      <div class="bar">
        <span class="it">${svgIcon('slope', 16)}<span>设置所有边坡</span></span><span style="margin-left:6px">${c}</span>
        <span class="it" style="margin-left:6px">${svgIcon('slopeoff', 16)}<span style="margin-left:1px">取消所有边坡</span></span><span style="margin-left:6px">${c}</span>
        <span class="it sel">${svgIcon('three', 16)}<span>三点定义斜筏板</span><span style="margin-left:6px">${c}</span></span>
        <span class="it" style="margin-left:5px">${svgIcon('magnify', 16)}<span style="margin-left:1px">查改标高</span></span>
      </div>
      <div class="menu">
        ${row('three', '三点定义斜筏板', true)}
        ${row('hammer', '抬起点定义斜筏板')}
        ${row('hammer2', '坡度系数定义斜筏板')}
      </div>
      <div class="tail"></div>`;
  }
}

class RedArrows extends HTMLElement {
  connectedCallback() {
    const arrow = (x1, y1, x2, y2) => {
      const a = Math.atan2(y2 - y1, x2 - x1), L = 19, W = 8;
      const bx = x2 - Math.cos(a) * L, by = y2 - Math.sin(a) * L;
      const nx = -Math.sin(a) * W, ny = Math.cos(a) * W;
      return `<path d="M${x1} ${y1}L${bx} ${by}" stroke="#ea1414" stroke-width="3.500"/>
        <path d="M${x2} ${y2}L${bx + nx} ${by + ny}L${bx - nx} ${by - ny}z" fill="#ea1414"/>`;
    };
    this.attachShadow({ mode: 'open' }).innerHTML = `
      <style>:host { position:absolute; left:0; top:0; width:1379px; height:703px; pointer-events:none; } svg { display:block; }</style>
      <svg width="1379" height="703" viewBox="0 0 1379 703">
        ${arrow(232, 196, 253, 274)}
        ${arrow(515, 114, 425, 268)}
        ${arrow(1168, 523, 518, 110)}
        ${arrow(196, 528, 225, 467)}
        ${arrow(518, 496, 471, 450)}
      </svg>`;
  }
}

class DeskTop extends HTMLElement {
  connectedCallback() {
    this.attachShadow({ mode: 'open' }).innerHTML = `
      <style>:host { display:flex; position:relative; width:1379px; height:703px; overflow:hidden; }</style><slot></slot>`;
  }
}

const tags = {
  'tool-row': ToolRow, 'tool-item': ToolItem, 'tool-sep': ToolSep, 'tool-grip': ToolGrip, 'tool-caret': ToolCaret,
  'tool-more': ToolMore, 'tool-select': ToolSelect, 'tool-block': ToolBlock, 'cad-menu': CadMenu, 'user-bar': UserBar,
  'cad-work': CadWork, 'pane-divider': PaneDivider, 'browser-nav': BrowserNav, 'browser-marks': BrowserMarks,
  'browser-tabs': BrowserTabs, 'qa-page': QaPage, 'cad-image': CadImage, 'side-float': SideFloat,
  'browser-pane': BrowserPane, 'cad-app': CadApp, 'slope-popup': SlopePopup, 'red-arrows': RedArrows, 'desk-top': DeskTop
};
Object.keys(tags).forEach(t => customElements.define(t, tags[t]));
</script>
</body>
</html>
